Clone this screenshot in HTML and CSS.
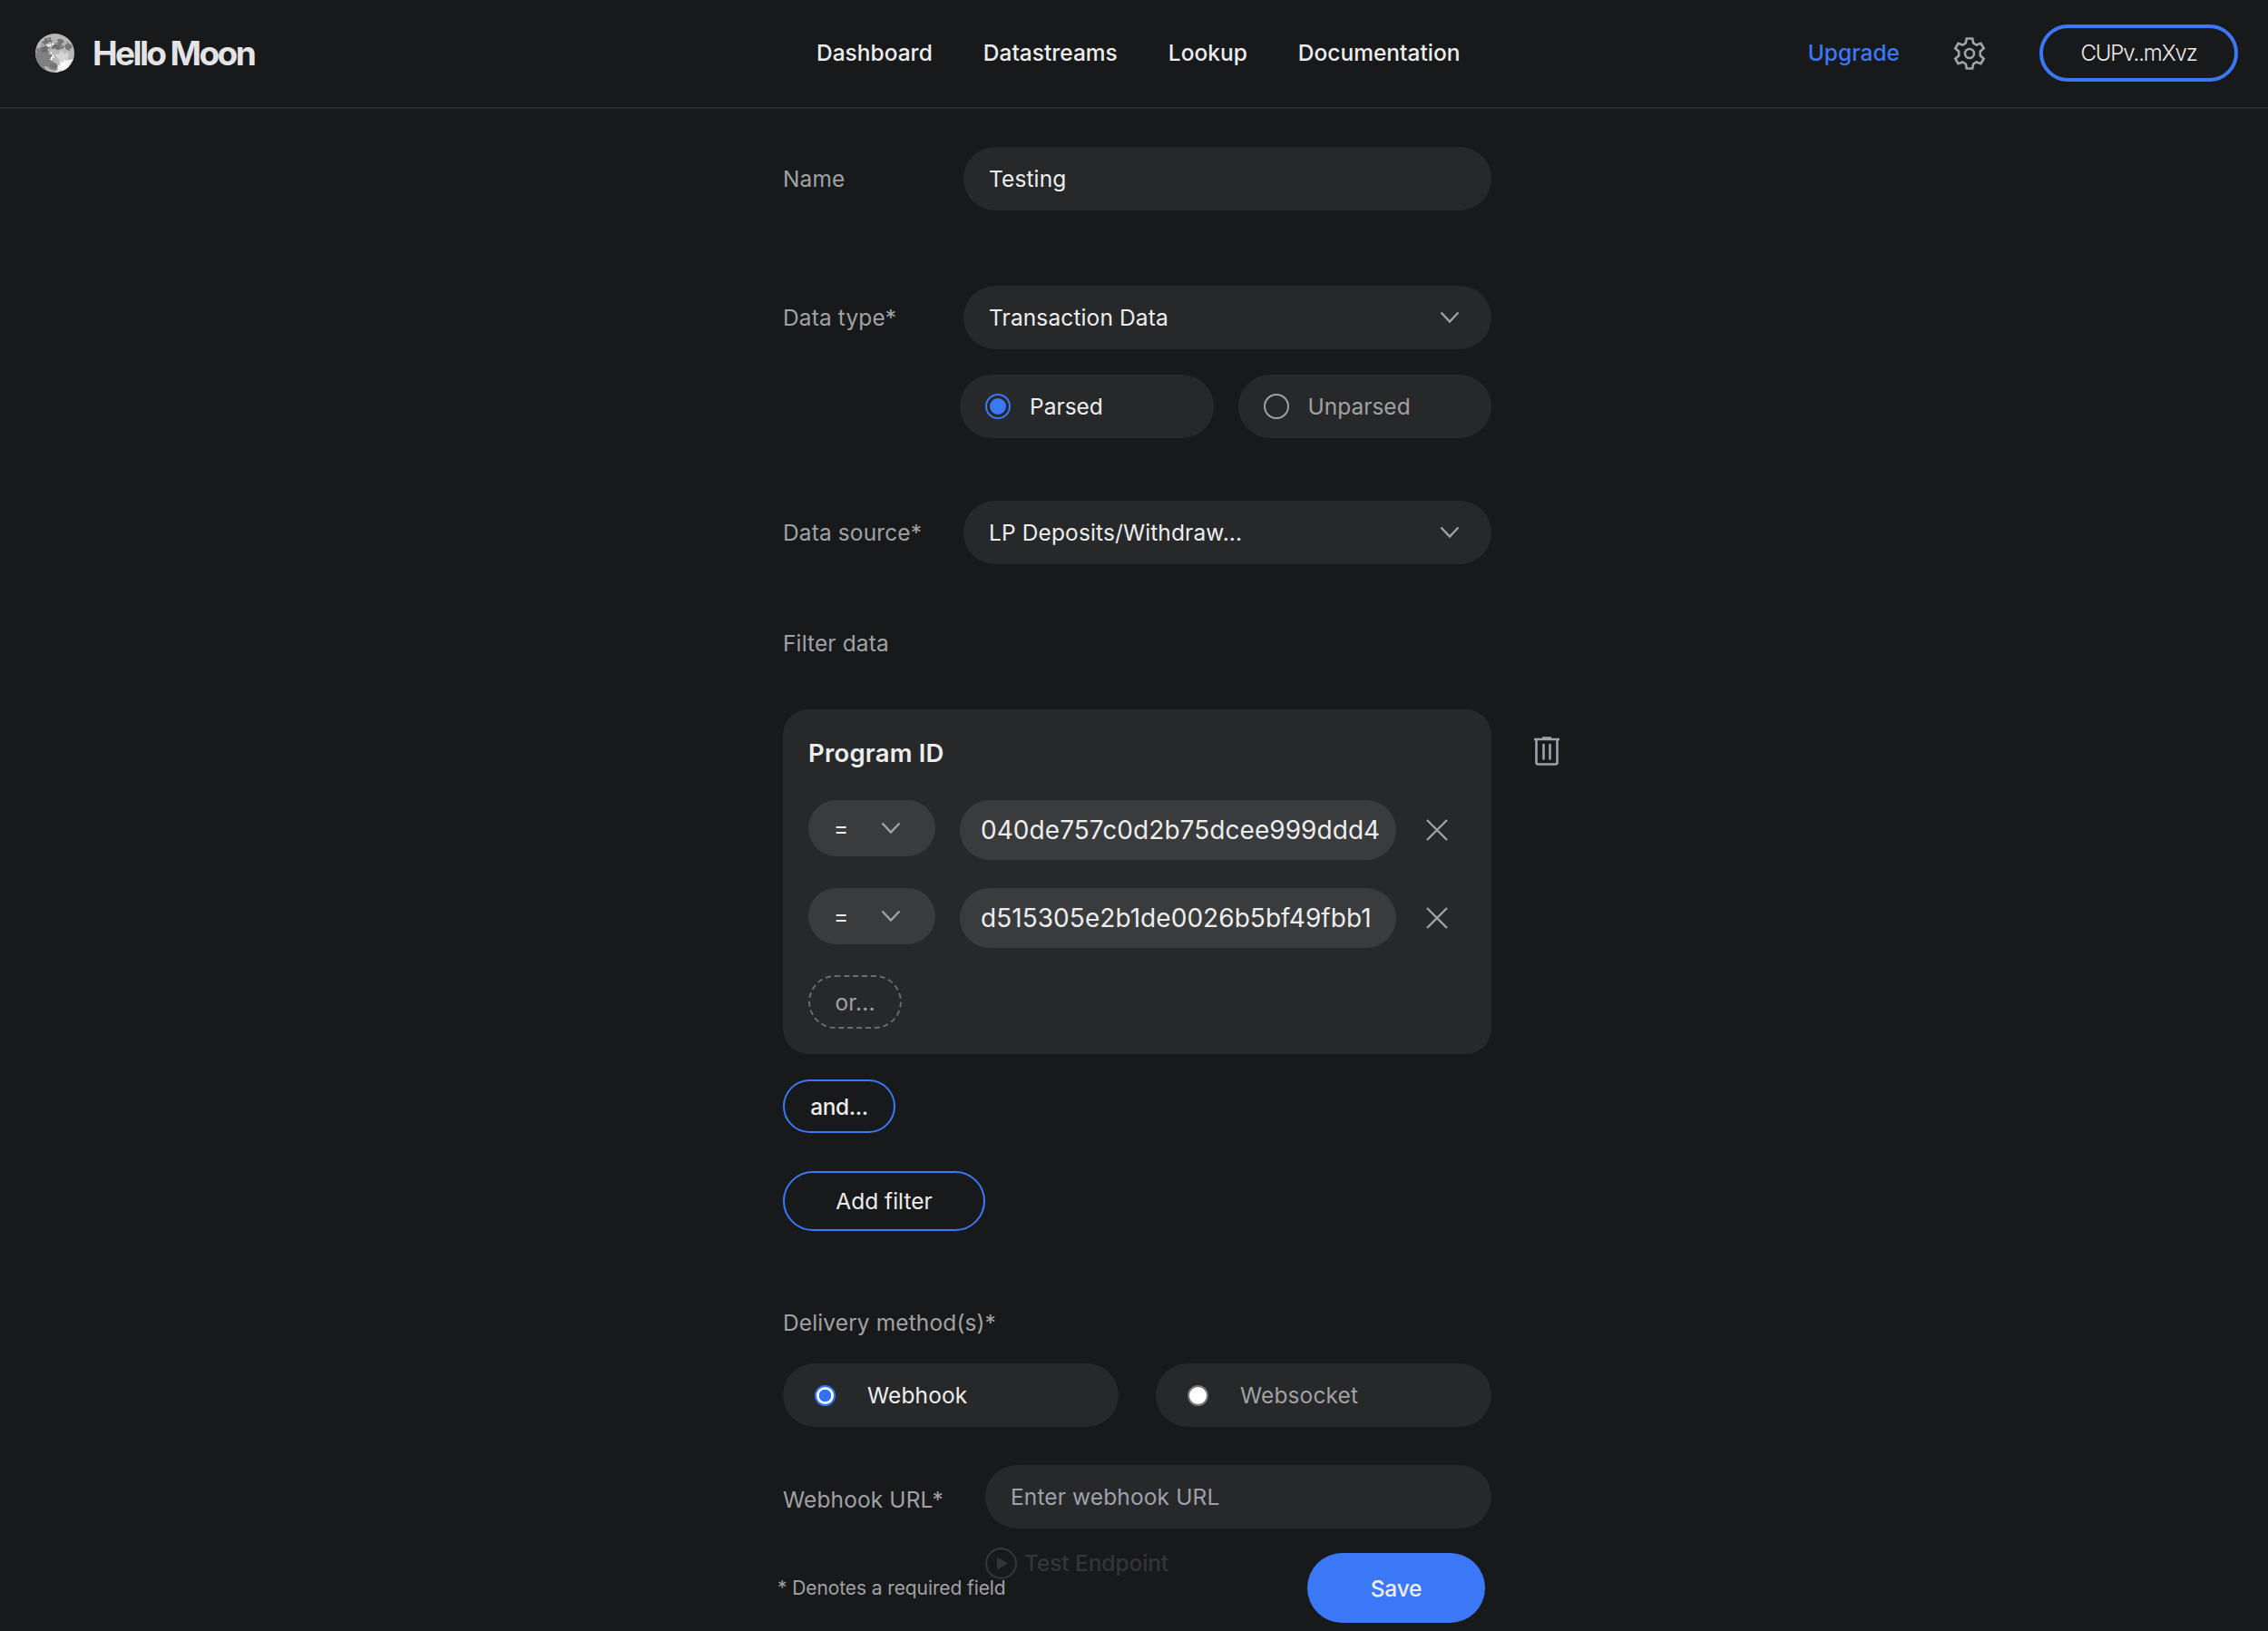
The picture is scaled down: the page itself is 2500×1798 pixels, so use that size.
FILE: index.html
```html
<!DOCTYPE html>
<html lang="en">

<head>
    <meta charset="UTF-8">
    <meta name="viewport" content="width=device-width, initial-scale=1.0">
    <title>Hello Moon</title>
    <link rel="stylesheet" href="styles.css">
</head>

<body>
    <header class="header">
        <a class="logo">
            <svg class="moon" viewBox="0 0 42 42">
                <defs>
                    <clipPath id="disc"><circle cx="21" cy="21" r="21" /></clipPath>
                    <filter id="rough">
                        <feTurbulence type="fractalNoise" baseFrequency="0.3" numOctaves="2" seed="4" />
                        <feDisplacementMap in="SourceGraphic" scale="7" xChannelSelector="R" yChannelSelector="G" />
                    </filter>
                </defs>
                <g clip-path="url(#disc)">
                    <rect width="42" height="42" fill="#b8b8b8" />
                    <g filter="url(#rough)">
                        <path d="M0 18l6-5 8 3 3 7 2 7-4 6-8 2-7-8z" fill="#808080" />
                        <ellipse cx="12" cy="8.500" rx="6" ry="3" transform="rotate(-25 12 8.500)" fill="#757575" />
                        <ellipse cx="27" cy="8.500" rx="4" ry="3" fill="#777" />
                        <ellipse cx="23" cy="14.500" rx="7" ry="3" fill="#707070" />
                        <ellipse cx="35" cy="13.500" rx="4" ry="3.500" fill="#777" />
                        <ellipse cx="10" cy="17" rx="4" ry="3" fill="#6c6c6c" />
                        <path d="M15 34l6-3 4 5-5 3-5-1z" fill="#757575" />
                        <path d="M22 22l7-3 7 3-3 7-8 1z" fill="#d6d6d6" />
                        <path d="M27 31l9-4 4 3-6 9-12 3 2-4z" fill="#f2f2f2" />
                        <path d="M18 19l2 6-2 5-1-6zM17 10l5 1-4 2-6 2zM28 34l4-4 2 2-4 6z" fill="#fff" />
                    </g>
                </g>
            </svg>
            <span class="logo-text">Hello Moon</span>
        </a>
        <nav class="nav">
            <a>Dashboard</a>
            <a>Datastreams</a>
            <a>Lookup</a>
            <a>Documentation</a>
        </nav>
        <div class="account">
            <a class="upgrade">Upgrade</a>
            <svg class="gear" viewBox="0 0 36 38">
                <path d="M14.800 2.500h6.400l1 5 3.400 2 4.900-1.700 3.200 5.500-3.900 3.400v4.600l3.900 3.400-3.200 5.500-4.900-1.700-3.400 2-1 5h-6.400l-1-5-3.400-2-4.900 1.700-3.200-5.500 3.900-3.400v-4.600l-3.900-3.400 3.200-5.500 4.900 1.700 3.400-2z" />
                <circle cx="18" cy="19" r="5" />
            </svg>
            <button class="wallet">CUPv..mXvz</button>
        </div>
    </header>

    <main class="form">
        <div class="row name-row">
            <label class="label">Name</label>
            <div class="field">Testing</div>
        </div>

        <div class="row type-row">
            <label class="label">Data type*</label>
            <div class="field">Transaction Data
                <svg class="chevron" viewBox="0 0 22 14"><path d="M1.500 1.500l9.500 10 9.500-10" /></svg>
            </div>
        </div>
        <div class="parse-options">
            <div class="option active"><span class="ring"></span>Parsed</div>
            <div class="option"><span class="ring"></span>Unparsed</div>
        </div>

        <div class="row source-row">
            <label class="label">Data source*</label>
            <div class="field">LP Deposits/Withdraw...
                <svg class="chevron" viewBox="0 0 22 14"><path d="M1.500 1.500l9.500 10 9.500-10" /></svg>
            </div>
        </div>

        <div class="label filter-label">Filter data</div>

        <div class="filter">
            <div class="card">
                <h2>Program ID</h2>
                <div class="condition">
                    <div class="operator">=
                        <svg class="chevron" viewBox="0 0 22 14"><path d="M1.500 1.500l9.500 10 9.500-10" /></svg>
                    </div>
                    <div class="value">040de757c0d2b75dcee999ddd4</div>
                    <svg class="close" viewBox="0 0 24 24"><path d="M1 1l22 22M23 1L1 23" /></svg>
                </div>
                <div class="condition">
                    <div class="operator">=
                        <svg class="chevron" viewBox="0 0 22 14"><path d="M1.500 1.500l9.500 10 9.500-10" /></svg>
                    </div>
                    <div class="value">d515305e2b1de0026b5bf49fbb1</div>
                    <svg class="close" viewBox="0 0 24 24"><path d="M1 1l22 22M23 1L1 23" /></svg>
                </div>
                <button class="or-btn">or...</button>
            </div>
            <svg class="trash" viewBox="0 0 28 32">
                <path d="M0 3h28M9 1.500h10M2.500 3v25.500a2 2 0 0 0 2 2h19a2 2 0 0 0 2-2V3" />
                <path d="M10.500 9v15.500M17.500 9v15.500" stroke-linecap="round" />
            </svg>
        </div>

        <button class="and-btn">and...</button>
        <button class="add-btn">Add filter</button>

        <div class="label delivery-label">Delivery method(s)*</div>
        <div class="delivery">
            <div class="method active"><span class="dot"></span>Webhook</div>
            <div class="method"><span class="dot"></span>Websocket</div>
        </div>

        <div class="row url-row">
            <label class="label">Webhook URL*</label>
            <div class="field placeholder">Enter webhook URL</div>
        </div>
        <div class="test">
            <svg class="play" viewBox="0 0 35 35">
                <circle cx="17.500" cy="17.500" r="16.400" />
                <path d="M14 12.500v10l9-5z" stroke-linejoin="round" />
            </svg>
            <span>Test Endpoint</span>
        </div>
    </main>

    <footer class="footer">
        <span class="note">* Denotes a required field</span>
        <button class="save">Save</button>
    </footer>
</body>

</html>
```
FILE: styles.css
```css
* {
    box-sizing: border-box;
}

body {
    margin: 0;
    height: 1798px;
    overflow: hidden;
    position: relative;
    background-color: #18191b;
    color: #ededee;
    font-family: Inter, "Liberation Sans", sans-serif;
    font-size: 24.500px;
    letter-spacing: 0.12px;
}

button {
    font: inherit;
    letter-spacing: inherit;
    color: inherit;
    background: none;
    padding: 0;
}

.header {
    height: 120px;
    display: grid;
    grid-template-columns: 861px 1fr auto;
    align-items: center;
    padding: 0 33px 1px 39px;
    border-bottom: 2px solid #2a2a2c;
}

.logo {
    display: flex;
    align-items: center;
    gap: 20px;
}

.moon {
    width: 43px;
    height: 43px;
}

.logo-text {
    font-size: 37px;
    line-height: 43px;
    font-weight: 700;
    letter-spacing: -2.600px;
    color: #e4e4e6;
}

.nav {
    display: flex;
    gap: 56px;
    padding-bottom: 1px;
    font-weight: 450;
    letter-spacing: 0;
}

.account {
    display: flex;
    align-items: center;
}

.upgrade {
    padding-bottom: 1px;
    color: #3b78f8;
    font-weight: 450;
    letter-spacing: 0;
}

.gear {
    width: 36px;
    height: 38px;
    margin: 0 59px;
    fill: none;
    stroke: #a3a3a6;
    stroke-width: 2.600;
}

.wallet {
    width: 219px;
    height: 63px;
    border: 4px solid #3b78f8;
    border-radius: 32px;
    font-size: 24px;
    font-weight: 300;
    letter-spacing: -1.100px;
}

.form {
    width: 781px;
    margin-left: 863px;
    padding-top: 42px;
}

.row {
    display: flex;
    align-items: center;
    justify-content: space-between;
}

.label {
    color: #a1a1a3;
}

.field {
    width: 582px;
    height: 70px;
    padding: 0 35px 0 28px;
    border-radius: 35px;
    background-color: #27282a;
    display: flex;
    align-items: center;
    justify-content: space-between;
}

.chevron {
    width: 22px;
    height: 14px;
    fill: none;
    stroke: #a0a0a9;
    stroke-width: 2.400;
}

.type-row {
    margin-top: 83px;
}

.parse-options {
    display: flex;
    gap: 27px;
    margin: 28px 0 0 195px;
}

.option {
    flex: 1;
    height: 70px;
    border-radius: 35px;
    background-color: #27282a;
    color: #a1a1a3;
    display: flex;
    align-items: center;
    gap: 21px;
    padding-left: 28px;
    letter-spacing: 0;
}

.ring {
    width: 28px;
    height: 28px;
    border: 2px solid #a1a1a3;
    border-radius: 50%;
    padding: 3px;
}

.active {
    color: #ededee;
}

.active .ring {
    border-color: #3b78f8;
    background-color: #3b78f8;
    background-clip: content-box;
}

.source-row {
    margin-top: 69px;
}

.filter-label {
    margin-top: 72px;
    line-height: 30px;
}

.filter {
    display: flex;
    gap: 47px;
    width: 860px;
    margin-top: 58px;
}

.card {
    width: 781px;
    height: 380px;
    flex-shrink: 0;
    padding: 28px;
    border-radius: 28px;
    background-color: #27282a;
}

.card h2 {
    margin: 0 0 31px;
    font-size: 27.500px;
    line-height: 41px;
    font-weight: 600;
    letter-spacing: 0.2px;
}

.condition {
    display: flex;
    height: 66px;
    margin-bottom: 31px;
}

.operator {
    width: 140px;
    height: 62px;
    padding: 0 38px 0 28px;
    border-radius: 31px;
    background-color: #3a3b3d;
    display: flex;
    align-items: center;
    justify-content: space-between;
}

.value {
    width: 481px;
    height: 66px;
    margin-left: 27px;
    padding-left: 23px;
    border-radius: 33px;
    background-color: #3a3b3d;
    font-size: 28px;
    line-height: 66px;
    letter-spacing: 0.05px;
    white-space: nowrap;
}

.close {
    width: 24px;
    height: 24px;
    margin: 21px 0 0 33px;
    stroke: #a0a0a9;
    stroke-width: 2.400;
}

.or-btn {
    display: block;
    width: 103px;
    height: 59px;
    margin-top: -1px;
    border: 2px dashed #6a6b6e;
    border-radius: 30px;
    color: #a1a1a3;
}

.trash {
    width: 28px;
    height: 32px;
    margin-top: 30px;
    fill: none;
    stroke: #a0a0a9;
    stroke-width: 2.600;
}

.and-btn,
.add-btn {
    display: block;
    border: 2px solid #3b78f8;
}

.and-btn {
    width: 124px;
    height: 59px;
    margin-top: 28px;
    border-radius: 30px;
    font-weight: 500;
    letter-spacing: -0.4px;
}

.add-btn {
    width: 223px;
    height: 66px;
    margin-top: 42px;
    border-radius: 33px;
    letter-spacing: 0;
}

.delivery-label {
    margin-top: 86px;
    line-height: 30px;
}

.delivery {
    display: flex;
    gap: 41px;
    margin-top: 30px;
}

.method {
    flex: 1;
    height: 70px;
    padding-left: 35px;
    border-radius: 35px;
    background-color: #27282a;
    color: #a1a1a3;
    display: flex;
    align-items: center;
    gap: 35px;
}

.method.active {
    color: #ededee;
}

.dot {
    width: 23px;
    height: 23px;
    border: 2px solid #767676;
    border-radius: 50%;
    background-color: #fff;
}

.active .dot {
    border-color: #2f74ff;
    background: radial-gradient(circle, #2f74ff 6.500px, #fff 7px);
}

.url-row {
    margin-top: 42px;
}

.url-row .label {
    padding-top: 6px;
}

.url-row .field {
    width: 558px;
}

.placeholder {
    color: #a0a0ab;
}

.test {
    display: flex;
    align-items: center;
    gap: 8px;
    height: 35px;
    margin: 21px 0 0 223px;
    color: #343537;
    font-weight: 500;
    letter-spacing: -0.1px;
}

.test span {
    padding-bottom: 1px;
}

.play {
    width: 35px;
    height: 35px;
    fill: none;
    stroke: #343537;
    stroke-width: 2.200;
}

.play path {
    fill: #343537;
}

/* stays over the end of the form */
.footer {
    position: absolute;
    left: 857px;
    bottom: 9px;
    width: 780px;
    display: flex;
    align-items: center;
    justify-content: space-between;
}

.note {
    color: #a1a1a3;
    font-size: 21px;
    letter-spacing: -0.1px;
}

.save {
    width: 196px;
    height: 77px;
    border: none;
    border-radius: 39px;
    background-color: #3b78f8;
    font-weight: 500;
    letter-spacing: -0.2px;
}
```
